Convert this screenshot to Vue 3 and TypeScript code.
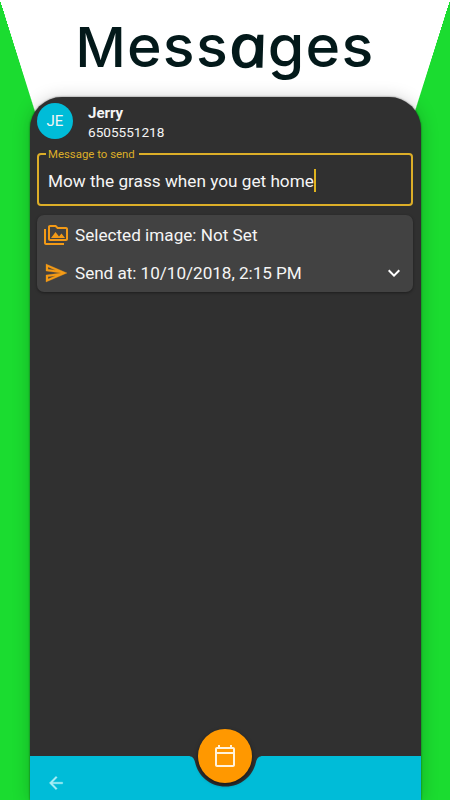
<script setup lang="ts">
import { ref } from 'vue'

interface Contact {
  initials: string
  name: string
  phone: string
}

const contact: Contact = { initials: 'JE', name: 'Jerry', phone: '6505551218' }
const message = ref('Mow the grass when you get home')
const image = ref('Not Set')
const sendAt = ref('10/10/2018, 2:15 PM')
</script>

<template>
  <main class="poster">
    <h1 class="title"><span class="cap">M</span>ess<span class="round">a</span>ges</h1>
    <section class="phone">
      <header class="contact">
        <div class="avatar">{{ contact.initials }}</div>
        <div class="who">
          <strong class="name">{{ contact.name }}</strong>
          <span class="number">{{ contact.phone }}</span>
        </div>
      </header>
      <fieldset class="field">
        <legend>Message to send</legend>
        <span class="message">{{ message }}</span><i class="caret"></i>
      </fieldset>
      <div class="card">
        <div class="row">
          <svg class="icon" viewBox="0 0 24 24"><path d="M2 6H0v5h.01L0 20c0 1.100.9 2 2 2h18v-2H2V6zm5 9h14l-3.500-4.500-2.500 3.010L11.500 9zM22 4h-8l-2-2H6c-1.100 0-1.990.9-1.990 2L4 16c0 1.100.9 2 2 2h16c1.100 0 2-.9 2-2V6c0-1.100-.9-2-2-2zm0 12H6V4h5.170l2 2H22v10z" /></svg>
          <span class="label">Selected image: {{ image }}</span>
        </div>
        <div class="row">
          <svg class="icon send" viewBox="0 0 24 24"><path d="M4.010 6.030l7.510 3.220-7.520-1 .01-2.220m7.500 8.720L4 17.970v-2.220l7.510-1M2.010 3L2 10l15 2-15 2 .01 7L23 12 2.010 3z" /></svg>
          <span class="label date">Send at: {{ sendAt }}</span>
          <svg class="chevron" viewBox="0 0 24 24"><path d="M7.410 8.590L12 13.170l4.590-4.580L18 10l-6 6-6-6z" /></svg>
        </div>
      </div>
      <footer class="bottom">
        <svg class="bar" viewBox="0 0 391 44" preserveAspectRatio="none">
          <path d="M0 0H158C162 0 164 2 165 6C168 20 180 30.500 195.500 30.500C211 30.500 223 20 226 6C227 2 229 0 233 0H391V44H0Z" />
        </svg>
        <svg class="back" viewBox="0 0 24 24"><path d="M20 11H7.830l5.590-5.590L12 4l-8 8 8 8 1.410-1.410L7.830 13H20z" /></svg>
        <div class="fab">
          <svg viewBox="0 0 24 24"><path d="M20 3h-1V1h-2v2H7V1H5v2H4c-1.100 0-2 .9-2 2v16c0 1.100.9 2 2 2h16c1.100 0 2-.9 2-2V5c0-1.100-.9-2-2-2zm0 18H4V10h16v11zm0-13H4V5h16v3z" /></svg>
        </div>
      </footer>
    </section>
  </main>
</template>

<style>
body {
  margin: 0;
  overflow: hidden;
}
</style>

<style scoped>
.poster {
  box-sizing: border-box;
  width: 450px;
  height: 800px;
  display: flex;
  flex-direction: column;
  align-items: center;
  overflow: hidden;
  background:
    conic-gradient(from 162.300deg at 0 0, transparent 0, #1bdc30 0.600deg 40deg, transparent 40deg) 0 0 / 225px 800px no-repeat,
    conic-gradient(from 157.500deg at 100% 0, #1bdc30 0 39.700deg, transparent 40.300deg) 225px 0 / 225px 800px no-repeat,
    #fff;
  font-family: Roboto, sans-serif;
}
.title {
  margin: 0;
  height: 97px;
  color: #03191a;
  font: 500 59px/92px Inter, sans-serif;
  letter-spacing: 1.300px;
  white-space: nowrap;
}
.cap {
  font-size: 55px;
}
.round {
  display: inline-block;
  margin: 0 3px 0 1px;
  font-family: 'Open Sans', sans-serif;
  font-style: italic;
  font-weight: 400;
  line-height: 1;
  -webkit-text-stroke: 1.500px #03191a;
  transform: skewX(12deg) scaleX(1.15);
}
.phone {
  box-sizing: border-box;
  width: 391px;
  height: 703px;
  flex: none;
  display: flex;
  flex-direction: column;
  border-radius: 32px 32px 0 0;
  background: #303030;
  box-shadow: 0 0 2px rgba(0, 0, 0, 0.6), 0 2px 18px rgba(0, 0, 0, 0.22);
  color: #f5f5f5;
}
.contact {
  display: flex;
  height: 50px;
  padding: 6px 0 0 7.500px;
  box-sizing: border-box;
}
.avatar {
  width: 36px;
  height: 36px;
  border-radius: 50%;
  background: #00bcd8;
  font-size: 15px;
  line-height: 37px;
  text-align: center;
}
.who {
  display: flex;
  flex-direction: column;
  margin-left: 15px;
}
.name {
  font-size: 15px;
  font-weight: 700;
  line-height: 21px;
}
.number {
  font-size: 13.600px;
  line-height: 17px;
}
.field {
  box-sizing: border-box;
  width: 376px;
  height: 59px;
  margin: 0 7px;
  padding: 0 0 0 9.500px;
  border: 2px solid #dcae28;
  border-radius: 4px;
  min-width: 0;
  white-space: nowrap;
}
.field legend {
  margin-left: -2px;
  padding: 0 4px 0 2px;
  height: 14px;
  color: #dcae28;
  font-size: 11.400px;
  line-height: 15px;
}
.message {
  font-size: 17.200px;
  line-height: 40px;
}
.caret {
  display: inline-block;
  width: 2px;
  height: 23px;
  vertical-align: -5px;
  background: #e0b41e;
}
.card {
  box-sizing: border-box;
  width: 376px;
  height: 77px;
  margin: 9px 7px 0;
  padding: 1px 7px 0;
  border-radius: 7px;
  background: #424242;
  box-shadow: 0 1px 3px rgba(0, 0, 0, 0.4);
}
.row {
  display: flex;
  align-items: center;
  height: 38px;
}
.icon {
  width: 24px;
  height: 24px;
  fill: #f39a16;
}
.send {
  stroke: #f39a16;
  stroke-width: 0.300px;
}
.label {
  flex: 1;
  margin-left: 7.500px;
  font-size: 17.150px;
  white-space: nowrap;
}
.date {
  letter-spacing: -0.040px;
}
.chevron {
  width: 24px;
  height: 24px;
  fill: #fff;
}
.bottom {
  position: relative;
  height: 44px;
  margin-top: auto;
}
.bar {
  display: block;
  width: 100%;
  height: 44px;
  fill: #00bcd8;
}
.back {
  position: absolute;
  left: 16px;
  top: 17px;
  width: 20px;
  height: 20px;
  fill: #a9eef5;
  stroke: #a9eef5;
  stroke-width: 0.400px;
}
.fab {
  position: absolute;
  left: 168.500px;
  top: -27px;
  width: 54px;
  height: 54px;
  display: grid;
  place-items: center;
  border-radius: 50%;
  background: #ff9800;
  box-shadow: 0 2px 4px rgba(0, 0, 0, 0.5);
}
.fab svg {
  width: 24px;
  height: 24px;
  fill: #fff2dc;
}
</style>
